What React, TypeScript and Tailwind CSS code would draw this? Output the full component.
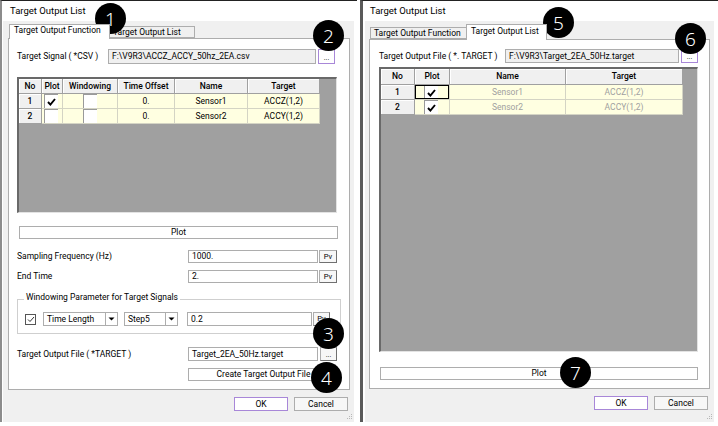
import React from 'react';

// small check glyph used in the grid checkboxes
const Tick: React.FC = () => (
  <svg width="9" height="8" viewBox="0 0 9 8">
    <path d="M1 4 L3.4 6.6 L8 1" fill="none" stroke="#000" strokeWidth="1.9" />
  </svg>
);

const Arrow: React.FC = () => (
  <svg width="7" height="4" viewBox="0 0 7 4">
    <path d="M0.5 0.5 L6.5 0.5 L3.5 3.5 Z" fill="#000" />
  </svg>
);

const Grip: React.FC = () => (
  <svg width="7" height="7" viewBox="0 0 7 7" className="absolute bottom-[2px] right-[1px]">
    <rect x="5" y="1" width="1" height="1" fill="#b8b8b8" />
    <rect x="3" y="3" width="1" height="1" fill="#b8b8b8" />
    <rect x="5" y="3" width="1" height="1" fill="#b8b8b8" />
    <rect x="1" y="5" width="1" height="1" fill="#b8b8b8" />
    <rect x="3" y="5" width="1" height="1" fill="#b8b8b8" />
    <rect x="5" y="5" width="1" height="1" fill="#b8b8b8" />
  </svg>
);

const Badge: React.FC<{ n: number; className: string }> = ({ n, className }) => (
  <div
    className={`absolute flex h-[31px] w-[31px] items-center justify-center rounded-full bg-black pt-px font-['Noto_Sans',sans-serif] text-[19px] font-light text-white ${className}`}
  >
    {n}
  </div>
);

const GridBox: React.FC<{ checked?: boolean }> = ({ checked }) => (
  <div className="flex h-full w-[14px] items-center justify-center border-l border-t border-[#9a9a9a] bg-white">
    {checked && <Tick />}
  </div>
);

const Dots: React.FC<{ purple?: boolean }> = ({ purple }) => (
  <div
    className={`ml-[2px] flex h-full w-[17px] items-end justify-center border pb-[1px] text-[7px] leading-none ${
      purple ? 'border-[#a887d8] bg-white' : 'border-[#adadad] border-r-[#707070] border-b-[#707070] bg-[#f7f7f7]'
    }`}
  >
    ...
  </div>
);

const Pv: React.FC = () => (
  <div className="ml-[1px] flex h-full w-[18px] items-center justify-center border border-[#adadad] border-r-[#707070] border-b-[#707070] bg-[#f7f7f7] text-[7.5px]">
    Pv
  </div>
);

const Combo: React.FC<{ label: string; w: string }> = ({ label, w }) => (
  <div className={`flex h-[14px] border border-[#adadad] bg-white ${w}`}>
    <div className="flex flex-1 items-center pl-[3px]">{label}</div>
    <div className="flex w-[12px] items-center justify-center border-l border-[#adadad]">
      <Arrow />
    </div>
  </div>
);

const HeadCell: React.FC<{ w: string; children: React.ReactNode }> = ({ w, children }) => (
  <div
    className={`flex h-full items-center justify-center border-r border-b border-[#a0a0a0] bg-[#f0f0f0] font-medium shadow-[inset_1px_1px_0_#fff] ${w}`}
  >
    {children}
  </div>
);

const Cell: React.FC<{ w: string; children?: React.ReactNode; dim?: boolean }> = ({ w, children, dim }) => (
  <div
    className={`flex h-full items-center justify-center border-r border-b border-[#d4d4c4] bg-[#ffffe1] ${
      dim ? 'text-[#a0a0a0]' : ''
    } ${w}`}
  >
    {children}
  </div>
);

const NoCell: React.FC<{ w: string; n: number }> = ({ w, n }) => (
  <div
    className={`flex h-full items-center justify-center border-r border-b border-[#a0a0a0] bg-[#f0f0f0] font-medium shadow-[inset_1px_1px_0_#fff] ${w}`}
  >
    {n}
  </div>
);

const leftRows = [
  { no: 1, plot: true, name: 'Sensor1', target: 'ACCZ(1,2)' },
  { no: 2, plot: false, name: 'Sensor2', target: 'ACCY(1,2)' },
];

const LeftDialog: React.FC = () => (
  <div className="flex h-[422px] w-[357px] flex-col border-t border-l-2 border-t-[#222] border-l-[#8c8c8c] bg-white">
    <div className="flex h-[20px] items-center pl-[8px] text-[9.5px]">Target Output List</div>
    <div className="relative ml-[1px] flex w-[351px] flex-1 flex-col bg-[#f0f0f0] pr-[4px] pl-[5px] pt-[3px]">
      {/* tabs */}
      <div className="flex h-[14px] items-end pl-[1px]">
        <div className="relative z-10 -mb-px flex h-[15px] w-[101px] items-start border border-b-0 border-[#adadad] bg-white pl-[4px] pt-[1px]">
          Target Output Function
        </div>
        <div className="-ml-px flex h-[12px] w-[86px] items-center border border-[#adadad] bg-[#f0f0f0] pl-[3px]">
          Target Output List
        </div>
      </div>

      <div className="flex h-[352px] w-[342px] flex-col border border-[#adadad] bg-white pl-[8px]">
        <div className="mt-[10px] flex h-[15px] items-center">
          <div className="w-[91px]">Target Signal ( *CSV )</div>
          <div className="flex h-full w-[208px] items-center border border-[#adadad] bg-[#f0f0f0] pl-[3px]">
            {'F:\\V9R3\\ACCZ_ACCY_50hz_2EA.csv'}
          </div>
          <Dots purple />
        </div>

        {/* signal grid */}
        <div className="mt-[13px] flex h-[136px] w-[320px] flex-col border-t-2 border-l-2 border-r border-b border-t-[#696969] border-l-[#696969] border-r-[#e3e3e3] border-b-[#e3e3e3] bg-[#a0a0a0]">
          <div className="flex h-[15px]">
            <HeadCell w="w-[23px]">No</HeadCell>
            <HeadCell w="w-[21px]">Plot</HeadCell>
            <HeadCell w="w-[55px]">Windowing</HeadCell>
            <HeadCell w="w-[57px]">Time Offset</HeadCell>
            <HeadCell w="w-[73px]">Name</HeadCell>
            <HeadCell w="w-[72px]">Target</HeadCell>
          </div>
          {leftRows.map((r) => (
            <div key={r.no} className="flex h-[15px]">
              <NoCell w="w-[23px]" n={r.no} />
              <div className="flex h-full w-[21px] border-r border-b border-[#d4d4c4] bg-[#ffffe1] pl-[2px]">
                <GridBox checked={r.plot} />
              </div>
              <div className="flex h-full w-[55px] border-r border-b border-[#d4d4c4] bg-[#ffffe1] pl-[20px]">
                <GridBox />
              </div>
              <Cell w="w-[57px]">0.</Cell>
              <Cell w="w-[73px]">{r.name}</Cell>
              <Cell w="w-[72px]">{r.target}</Cell>
            </div>
          ))}
        </div>

        <div className="mt-[13px] ml-[2px] flex h-[13px] w-[319px] items-center justify-center border border-[#adadad] bg-white">
          Plot
        </div>

        <div className="mt-[11px] flex h-[13px] items-center">
          <div className="w-[171px]">Sampling Frequency (Hz)</div>
          <div className="flex h-full w-[130px] items-center border border-[#adadad] bg-white pl-[3px]">1000.</div>
          <Pv />
        </div>
        <div className="mt-[7px] flex h-[13px] items-center">
          <div className="w-[171px]">End Time</div>
          <div className="flex h-full w-[130px] items-center border border-[#adadad] bg-white pl-[3px]">2.</div>
          <Pv />
        </div>

        {/* windowing group */}
        <div className="relative mt-[16px] h-[35px] w-[324px] border border-[#cfcfcf] pt-[12px] pl-[7px]">
          <div className="absolute -top-[7px] left-[6px] bg-white px-[2px]">
            Windowing Parameter for Target Signals
          </div>
          <div className="flex h-[14px] items-center">
            <div className="flex h-[11px] w-[11px] items-center justify-center border border-[#555] bg-white">
              <svg width="8" height="7" viewBox="0 0 8 7">
                <path d="M1 3.5 L3 5.5 L7 1" fill="none" stroke="#333" strokeWidth="1" />
              </svg>
            </div>
            <div className="ml-[7px]">
              <Combo label="Time Length" w="w-[75px]" />
            </div>
            <div className="ml-[6px]">
              <Combo label="Step5" w="w-[54px]" />
            </div>
            <div className="ml-[9px] flex h-full w-[125px] items-center border border-[#adadad] bg-white pl-[3px]">0.2</div>
            <div className="ml-[1px] flex h-full w-[17px] items-center justify-center border border-[#adadad] border-r-[#707070] border-b-[#707070] bg-[#f7f7f7] text-[7.5px]">
              Pv
            </div>
          </div>
        </div>

        <div className="mt-[13px] flex h-[14px] items-center">
          <div className="w-[171px]">Target Output File ( *TARGET )</div>
          <div className="flex h-full w-[130px] items-center border border-[#adadad] bg-white pl-[3px]">
            Target_2EA_50Hz.target
          </div>
          <Dots />
        </div>
        <div className="mt-[7px] ml-[171px] flex h-[13px] w-[151px] items-center justify-center border border-[#adadad] bg-white">
          Create Target Output File
        </div>
      </div>

      <div className="mt-[7px] mr-[2px] flex h-[14px] justify-end gap-[6px]">
        <div className="flex w-[54px] items-center justify-center border border-[#a887d8] bg-white">OK</div>
        <div className="flex w-[54px] items-center justify-center border border-[#adadad] bg-[#f7f7f7]">Cancel</div>
      </div>
      <Grip />
    </div>
  </div>
);

const rightRows = [
  { no: 1, name: 'Sensor1', target: 'ACCZ(1,2)', focus: true },
  { no: 2, name: 'Sensor2', target: 'ACCY(1,2)', focus: false },
];

const RightDialog: React.FC = () => (
  <div className="flex h-[422px] w-[358px] flex-col border-t border-l-[3px] border-t-[#222] border-l-[#5a5a5a] bg-white">
    <div className="flex h-[20px] items-center pl-[7px] text-[9.5px]">Target Output List</div>
    <div className="relative ml-[2px] flex w-[349px] flex-1 flex-col bg-[#f0f0f0] pr-[4px] pl-[4px] pt-[3px]">
      <div className="flex h-[15px] items-end pl-[1px]">
        <div className="flex h-[12px] w-[97px] items-center border border-[#adadad] bg-[#f0f0f0] pl-[3px]">
          Target Output Function
        </div>
        <div className="relative z-10 -mb-px -ml-px flex h-[16px] w-[81px] items-start border border-b-0 border-[#adadad] bg-white pl-[4px] pt-[2px]">
          Target Output List
        </div>
      </div>

      <div className="flex h-[350px] w-[341px] flex-col border border-[#adadad] bg-white pl-[9px]">
        <div className="mt-[9px] flex h-[14px] items-center">
          <div className="w-[126px]">Target Output File ( *. TARGET )</div>
          <div className="flex h-full w-[174px] items-center border border-[#adadad] bg-[#f0f0f0] pl-[3px]">
            {'F:\\V9R3\\Target_2EA_50Hz.target'}
          </div>
          <Dots purple />
        </div>

        <div className="mt-[4px] flex h-[285px] w-[319px] flex-col border-t-2 border-l-2 border-r border-b border-t-[#696969] border-l-[#696969] border-r-[#e3e3e3] border-b-[#e3e3e3] bg-[#a0a0a0]">
          <div className="flex h-[16px]">
            <HeadCell w="w-[34px]">No</HeadCell>
            <HeadCell w="w-[35px]">Plot</HeadCell>
            <HeadCell w="w-[116px]">Name</HeadCell>
            <HeadCell w="w-[117px]">Target</HeadCell>
          </div>
          {rightRows.map((r) => (
            <div key={r.no} className="flex h-[15px]">
              <NoCell w="w-[34px]" n={r.no} />
              <div className="relative flex h-full w-[35px] border-r border-b border-[#d4d4c4] bg-[#ffffe1] pl-[9px]">
                <GridBox checked />
                {r.focus && <div className="absolute inset-0 border border-black" />}
              </div>
              <Cell w="w-[116px]" dim>
                {r.name}
              </Cell>
              <Cell w="w-[117px]" dim>
                {r.target}
              </Cell>
            </div>
          ))}
        </div>

        <div className="mt-[15px] ml-px flex h-[13px] w-[318px] items-center justify-center border border-[#adadad] bg-white">
          Plot
        </div>
      </div>

      <div className="mt-[7px] mr-[2px] flex h-[14px] justify-end gap-[6px]">
        <div className="flex w-[54px] items-center justify-center border border-[#a887d8] bg-white">OK</div>
        <div className="flex w-[54px] items-center justify-center border border-[#adadad] bg-[#f7f7f7]">Cancel</div>
      </div>
      <Grip />
    </div>
  </div>
);

export default function App() {
  return (
    <div className="relative flex h-[426px] w-[718px] gap-[3px] overflow-hidden bg-white font-['Roboto',sans-serif] text-[8.5px] leading-none text-black">
      <LeftDialog />
      <RightDialog />

      <Badge n={1} className="top-[3px] left-[95px]" />
      <Badge n={2} className="top-[20px] left-[313px]" />
      <Badge n={3} className="top-[318px] left-[313px]" />
      <Badge n={4} className="top-[362px] left-[311px]" />
      <Badge n={5} className="top-[7px] left-[543px]" />
      <Badge n={6} className="top-[23px] left-[675px]" />
      <Badge n={7} className="top-[357px] left-[560px]" />
    </div>
  );
}
